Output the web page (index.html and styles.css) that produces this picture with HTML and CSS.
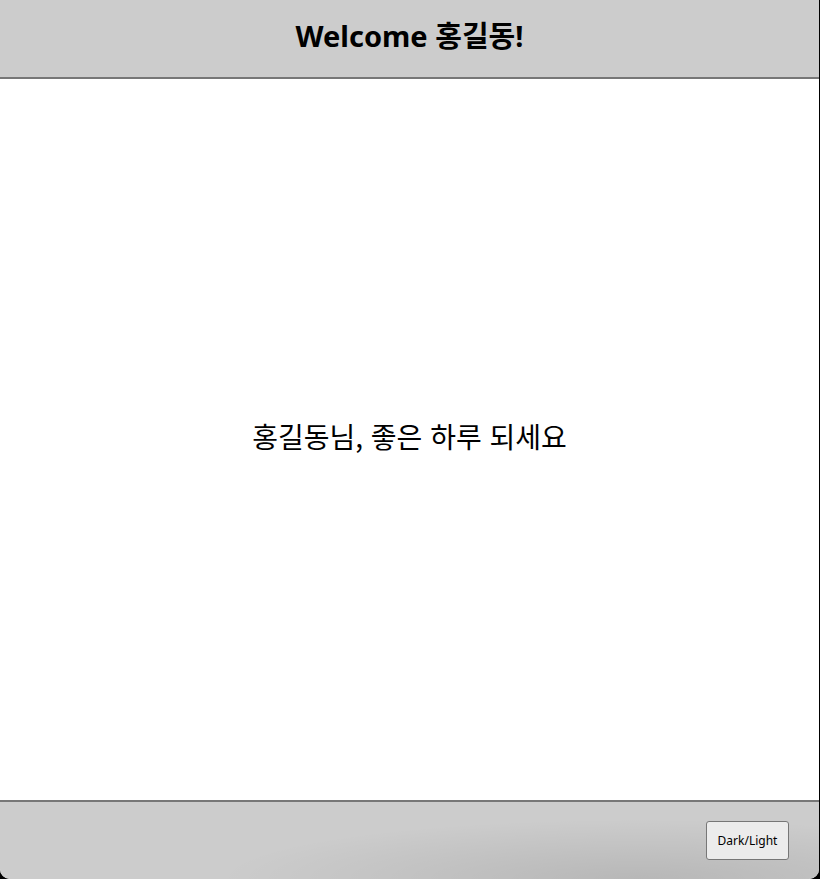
FILE: index.html
```html
<!DOCTYPE html>
<html lang="ko">
<head>
<meta charset="utf-8">
<title>Welcome</title>
<link rel="stylesheet" href="styles.css">
</head>
<body>
<div class="app">
  <header class="header">
    <h1 class="title">Welcome 홍길동!</h1>
  </header>
  <main class="content">
    <p class="greeting">홍길동님, 좋은 하루 되세요</p>
  </main>
  <footer class="footer">
    <button class="toggle">Dark/Light</button>
  </footer>
</div>
</body>
</html>
```

FILE: styles.css
```css
html, body {
  margin: 0;
  padding: 0;
  background: #000;
  height: 879px;
  overflow: hidden;
}
.app {
  width: 819px;
  height: 879px;
  display: flex;
  flex-direction: column;
  background: #fff;
  border-radius: 0 0 10px 10px;
  overflow: hidden;
  font-family: "Noto Sans", "Noto Sans CJK KR", sans-serif;
}
.header {
  height: 77px;
  background: #cccccc;
  border-bottom: 2px solid #777;
  display: flex;
  align-items: center;
  justify-content: center;
}
.title {
  margin: 0 0 5px;
  font-size: 29px;
  line-height: 1.2;
  font-weight: 700;
  color: #000;
}
.content {
  flex: 1;
  display: flex;
  align-items: center;
  justify-content: center;
}
.greeting {
  margin: 0 0 6px;
  font-size: 28px;
  line-height: 1.2;
  font-family: "Noto Sans CJK KR", sans-serif;
  color: #000;
}
.footer {
  height: 77px;
  border-top: 2px solid #777;
  background: radial-gradient(ellipse 420px 60px at 78% 100%, rgba(0,0,0,0.1), rgba(0,0,0,0) 100%), #cccccc;
  display: flex;
  align-items: center;
  justify-content: flex-end;
  padding-right: 30px;
}
.toggle {
  width: 83px;
  height: 39px;
  background: #ececec;
  border: 1px solid #777;
  border-radius: 3px;
  font-family: "Noto Sans", "Noto Sans CJK KR", sans-serif;
  font-size: 12px;
  color: #000;
  padding: 0;
}
```
